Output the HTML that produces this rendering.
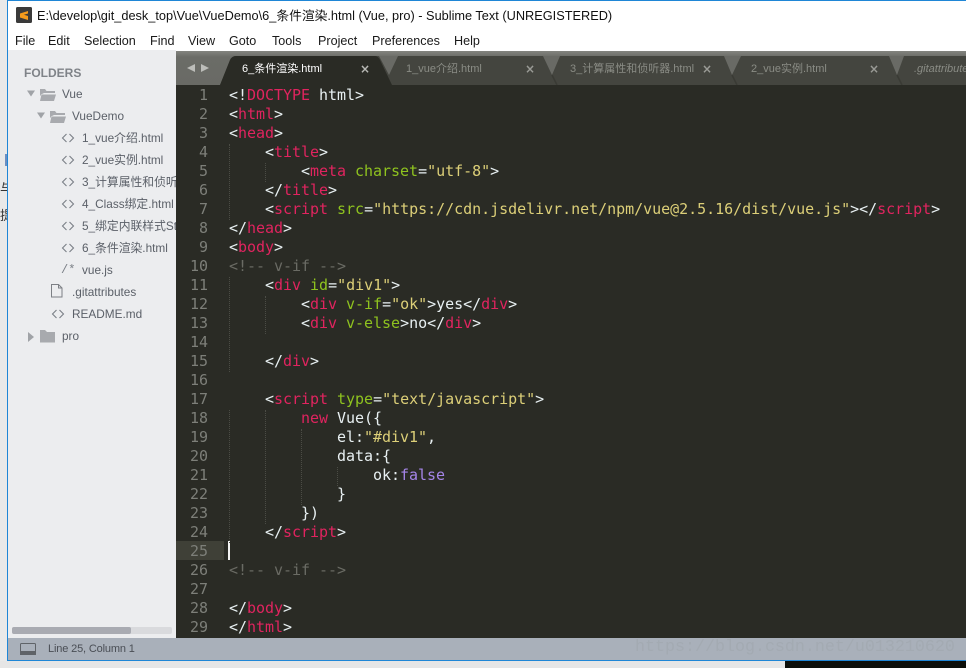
<!DOCTYPE html>
<html><head><meta charset="utf-8">
<style>
html,body{margin:0;padding:0;width:966px;height:668px;overflow:hidden;background:#fff;font-family:"Liberation Sans","Noto Sans CJK SC",sans-serif}
.a{position:absolute}
#win{position:absolute;left:7px;top:0;width:959px;height:661px;background:#fff;border-left:1px solid #1f86d6;border-top:1px solid #1f86d6;border-bottom:2px solid #1f86d6;box-sizing:border-box}
.m{position:absolute;top:33px;font-size:12.6px;color:#1a1a1a;line-height:16px;white-space:nowrap}
.s{position:absolute;font-size:11.8px;color:#5b6068;line-height:16px;white-space:nowrap}
.ic{position:absolute;left:61px;width:14px;height:10px}
.ic2{position:absolute;font-size:12px;color:#7a7f86;line-height:16px;font-family:"Liberation Mono",monospace;white-space:nowrap}
.t{position:absolute;top:62px;font-size:11px;line-height:14px;color:#8a8c85;white-space:nowrap}
.x{position:absolute;top:62px;font-size:12px;line-height:14px;font-weight:bold;color:#9a9b96;font-family:"DejaVu Sans",sans-serif}
pre{margin:0;position:absolute;font-family:"DejaVu Sans Mono","Noto Sans CJK SC",monospace;font-size:15px;letter-spacing:-.03px;line-height:19px;color:#e8f0f2}
#nums{left:176px;top:86px;width:32px;text-align:right;color:#7d7f79}
#code{left:229px;top:86px}
i{font-style:normal}
.r{color:#e0245f}.g{color:#8fc31f}.y{color:#dccf78}.c{color:#6a6b64}.p{color:#a585e8}
.gd{position:absolute;width:0;border-left:1px dotted #4b4c45}
</style></head><body>
<svg width="0" height="0" style="position:absolute"><defs><symbol id="lt" viewBox="0 0 14 10"><path d="M5.500 1 1.500 5l4 4M8.500 1l4 4-4 4" fill="none" stroke="#7a7f86" stroke-width="1.100"/></symbol></defs></svg>
<div class="a" style="left:0;top:0;width:7px;height:668px;background:#e9e9e9"></div>
<div class="a" style="left:5px;top:154px;width:2px;height:12px;background:#6e8fc0"></div>
<div class="a" style="left:0;top:178px;width:7px;height:14px;font-size:13px;color:#333;overflow:hidden">与</div>
<div class="a" style="left:0;top:205px;width:7px;height:16px;font-size:13px;color:#333;overflow:hidden">提</div>
<div class="a" style="left:0;top:661px;width:785px;height:7px;background:#e6e6e6"></div>
<div class="a" style="left:785px;top:661px;width:181px;height:7px;background:#0d0f0a"></div>
<div id="win"></div>

<!-- title -->
<svg class="a" style="left:16px;top:7px" width="16" height="16"><rect width="16" height="16" rx="1.500" fill="#3a3a3a"/><path d="M4 6.500 12 4V6.500L4 9ZM4 9l8 2.300V13L4 10.500ZM4 6.500 12 9v2.300L4 9Z" fill="#f59b1c"/></svg>
<div class="a" style="left:37px;top:8px;font-size:12.75px;line-height:16px;color:#111;white-space:nowrap">E:\develop\git_desk_top\Vue\VueDemo\6_条件渲染.html (Vue, pro) - Sublime Text (UNREGISTERED)</div>
<div class="m" style="left:15px">File</div><div class="m" style="left:48px">Edit</div><div class="m" style="left:84px">Selection</div><div class="m" style="left:150px">Find</div><div class="m" style="left:188px">View</div><div class="m" style="left:229px">Goto</div><div class="m" style="left:272px">Tools</div><div class="m" style="left:318px">Project</div><div class="m" style="left:372px">Preferences</div><div class="m" style="left:454px">Help</div>

<!-- sidebar -->
<div class="a" style="left:8px;top:50px;width:168px;height:588px;background:#ecedef"></div>
<div class="a" style="left:24px;top:65px;font-size:12px;font-weight:bold;color:#7f8388;line-height:16px">FOLDERS</div>
<svg class="a" style="left:8px;top:85px" width="168" height="260">
<path d="M19 5.500h8l-4 6ZM29 27.500h8l-4 6Z" fill="#a0a3a7"/>
<path d="M20 247v10l6-5Z" fill="#a0a3a7"/>
<g fill="#a8aaae"><path d="M32 4h5l1.500 2h8.500v2H36l-3 1.500-1 2ZM33.500 9.500H48L46 16H32Z"/><path d="M42 26h5l1.500 2h8.500v2H46l-3 1.500-1 2ZM43.500 31.500H58L56 38H42Z"/><path d="M32 245h5l2 2h8v10.500H32Z"/></g>
<path d="M43.500 199.500h7l3.500 3.500v9h-10.500Z M50.500 199.500v3.500H54" fill="none" stroke="#7d8085" stroke-width="1"/>
</svg>
<div class="s" style="left:62px;top:86px">Vue</div>
<div class="s" style="left:72px;top:108px">VueDemo</div>
<svg class="ic" style="top:133px"><use href="#lt"/></svg><div class="s" style="left:82px;top:130px">1_vue介绍.html</div>
<svg class="ic" style="top:155px"><use href="#lt"/></svg><div class="s" style="left:82px;top:152px">2_vue实例.html</div>
<svg class="ic" style="top:177px"><use href="#lt"/></svg><div class="s" style="left:82px;top:174px;width:94px;overflow:hidden">3_计算属性和侦听器.html</div>
<svg class="ic" style="top:199px"><use href="#lt"/></svg><div class="s" style="left:82px;top:196px">4_Class绑定.html</div>
<svg class="ic" style="top:221px"><use href="#lt"/></svg><div class="s" style="left:82px;top:218px;width:94px;overflow:hidden">5_绑定内联样式Style.html</div>
<svg class="ic" style="top:243px"><use href="#lt"/></svg><div class="s" style="left:82px;top:240px">6_条件渲染.html</div>
<div class="ic2" style="left:61px;top:262px">/*</div><div class="s" style="left:82px;top:262px">vue.js</div>
<div class="s" style="left:72px;top:284px">.gitattributes</div>
<svg class="ic" style="left:51px;top:309px"><use href="#lt"/></svg><div class="s" style="left:72px;top:306px">README.md</div>
<div class="s" style="left:62px;top:328px">pro</div>
<div class="a" style="left:12px;top:627px;width:160px;height:7px;background:#d9dadd;border-radius:2px"></div>
<div class="a" style="left:12px;top:627px;width:119px;height:7px;background:#a9abb2;border-radius:2px"></div>

<!-- tab bar -->
<div class="a" style="left:176px;top:51px;width:790px;height:34px;background:linear-gradient(#83847f,#6b6c67 6px,#696a65)"></div>
<svg class="a" style="left:176px;top:51px" width="790" height="34">
<path d="M19 13 11 17 19 21ZM25 13 33 17 25 21Z" fill="#bcbdb9"/>
<path d="M44 34 54 9Q56 5 60 5H790V34Z" fill="#44453f"/>
<g fill="#696a65">
<path d="M203 5H222L213 24Z"/>
<path d="M367 5H384L376 24Z"/>
<path d="M548 5H565L556 24Z"/>
<path d="M713 5H728L721 24Z"/>
</g>
<g stroke="#3a3b35" stroke-width="1.500" fill="none">
<path d="M376 24 381 34M556 24 561 34M721 24 726 34"/>
</g>
<path d="M44 34 54 9Q56 5 60 5H199Q202 5 204 9L216 34Z" fill="#2a2b25"/>
</svg>
<div class="t" style="left:242px;color:#fff">6_条件渲染.html</div><div class="x" style="left:360px;color:#b8b9b5">×</div>
<div class="t" style="left:406px">1_vue介绍.html</div><div class="x" style="left:525px">×</div>
<div class="t" style="left:570px">3_计算属性和侦听器.html</div><div class="x" style="left:702px">×</div>
<div class="t" style="left:751px">2_vue实例.html</div><div class="x" style="left:869px">×</div>
<div class="t" style="left:914px;font-style:italic">.gitattributes</div>

<!-- editor -->
<div class="a" style="left:176px;top:85px;width:790px;height:553px;background:#2a2b25"></div>
<div class="a" style="left:176px;top:541px;width:48px;height:19px;background:#3f4037"></div>
<div class="a" style="left:228px;top:541px;width:2px;height:19px;background:#f2f2f2"></div>
<div class="gd" style="left:229px;top:144px;height:76px"></div>
<div class="gd" style="left:265px;top:163px;height:19px"></div>
<div class="gd" style="left:229px;top:277px;height:95px"></div>
<div class="gd" style="left:265px;top:296px;height:38px"></div>
<div class="gd" style="left:229px;top:410px;height:133px"></div>
<div class="gd" style="left:265px;top:410px;height:114px"></div>
<div class="gd" style="left:301px;top:429px;height:76px"></div>
<div class="gd" style="left:337px;top:467px;height:19px"></div>
<pre id="nums">1
2
3
4
5
6
7
8
9
10
11
12
13
14
15
16
17
18
19
20
21
22
23
24
25
26
27
28
29</pre>
<pre id="code">&lt;!<i class="r">DOCTYPE</i> html&gt;
&lt;<i class="r">html</i>&gt;
&lt;<i class="r">head</i>&gt;
    &lt;<i class="r">title</i>&gt;
        &lt;<i class="r">meta</i> <i class="g">charset</i>=<i class="y">"utf-8"</i>&gt;
    &lt;/<i class="r">title</i>&gt;
    &lt;<i class="r">script</i> <i class="g">src</i>=<i class="y">"https://cdn.jsdelivr.net/npm/vue@2.5.16/dist/vue.js"</i>&gt;&lt;/<i class="r">script</i>&gt;
&lt;/<i class="r">head</i>&gt;
&lt;<i class="r">body</i>&gt;
<i class="c">&lt;!-- v-if --&gt;</i>
    &lt;<i class="r">div</i> <i class="g">id</i>=<i class="y">"div1"</i>&gt;
        &lt;<i class="r">div</i> <i class="g">v-if</i>=<i class="y">"ok"</i>&gt;yes&lt;/<i class="r">div</i>&gt;
        &lt;<i class="r">div</i> <i class="g">v-else</i>&gt;no&lt;/<i class="r">div</i>&gt;

    &lt;/<i class="r">div</i>&gt;

    &lt;<i class="r">script</i> <i class="g">type</i>=<i class="y">"text/javascript"</i>&gt;
        <i class="r">new</i> Vue({
            el:<i class="y">"#div1"</i>,
            data:{
                ok:<i class="p">false</i>
            }
        })
    &lt;/<i class="r">script</i>&gt;

<i class="c">&lt;!-- v-if --&gt;</i>

&lt;/<i class="r">body</i>&gt;
&lt;/<i class="r">html</i>&gt;</pre>

<!-- status -->
<div class="a" style="left:8px;top:638px;width:958px;height:22px;background:#a9b0ba"></div>
<svg class="a" style="left:20px;top:643px" width="17" height="13"><rect x=".5" y=".5" width="15" height="11" rx="1" fill="none" stroke="#5f6368"/><rect x="0" y="8" width="16" height="4" fill="#5f6368"/></svg>
<div class="a" style="left:48px;top:641px;font-size:11px;letter-spacing:-.15px;line-height:16px;color:#4a4e55">Line 25, Column 1</div>
<div class="a" style="left:635px;top:638px;font-family:'Liberation Mono',monospace;font-size:16.67px;line-height:20px;color:#a3aab2;white-space:nowrap">https://blog.csdn.net/u013210620</div>
</body></html>
